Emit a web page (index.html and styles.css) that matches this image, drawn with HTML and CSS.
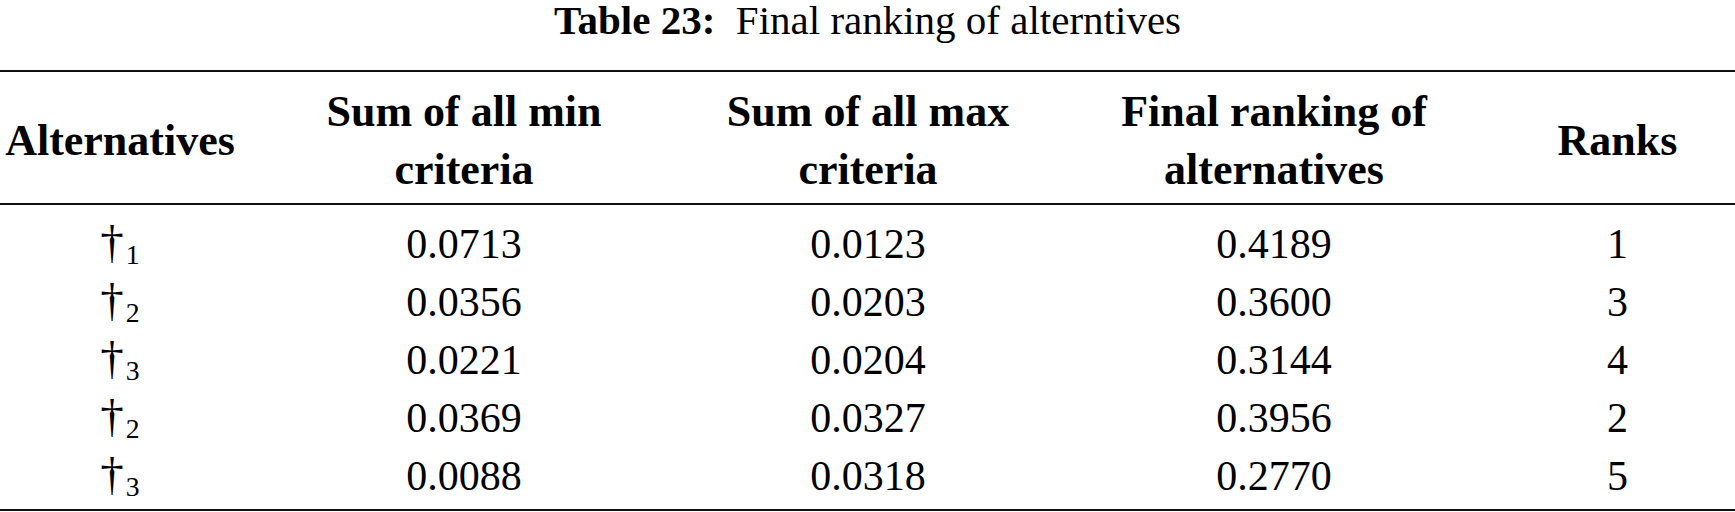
FILE: index.html
```html
<!DOCTYPE html>
<html lang="en">
<head>
    <meta charset="UTF-8">
    <meta name="viewport" content="width=device-width, initial-scale=1.0">
    <title>Table 23</title>

    <link rel="stylesheet" href="styles.css">
</head>
<body>
    <table class="rank-table">
        <caption><b>Table 23:</b>&nbsp; Final ranking of alterntives</caption>
        <colgroup>
            <col class="col-alt">
            <col class="col-min">
            <col class="col-max">
            <col class="col-final">
            <col class="col-rank">
        </colgroup>
        <thead>
            <tr>
                <th>Alternatives</th>
                <th>Sum of all min<br>criteria</th>
                <th>Sum of all max<br>criteria</th>
                <th>Final ranking of<br>alternatives</th>
                <th>Ranks</th>
            </tr>
        </thead>
        <tbody>
            <tr><td><span class="dag">†</span><sub>1</sub></td><td>0.0713</td><td>0.0123</td><td>0.4189</td><td>1</td></tr>
            <tr><td><span class="dag">†</span><sub>2</sub></td><td>0.0356</td><td>0.0203</td><td>0.3600</td><td>3</td></tr>
            <tr><td><span class="dag">†</span><sub>3</sub></td><td>0.0221</td><td>0.0204</td><td>0.3144</td><td>4</td></tr>
            <tr><td><span class="dag">†</span><sub>2</sub></td><td>0.0369</td><td>0.0327</td><td>0.3956</td><td>2</td></tr>
            <tr><td><span class="dag">†</span><sub>3</sub></td><td>0.0088</td><td>0.0318</td><td>0.2770</td><td>5</td></tr>
        </tbody>
    </table>
</body>
</html>
```
FILE: styles.css
```css
body{
    margin: 0;
    background-color: #fff;
    color: #000;
    font-family: 'Liberation Serif', 'Times New Roman', serif;
}
.rank-table{
    width: 100%;
    border-collapse: collapse;
    table-layout: fixed;
}
.rank-table caption{
    font-size: 41px;
    line-height: 40px;
    padding: 0 0 30px 0;
    text-align: center;
}
.col-alt{ width: 240px; }
.col-min{ width: 448px; }
.col-max{ width: 360px; }
.col-final{ width: 452px; }
.col-rank{ width: 235px; }

.rank-table th{
    font-size: 44px;
    font-weight: bold;
    line-height: 58px;
    padding: 11px 0 4px 0;
    text-align: center;
    vertical-align: middle;
    border-top: 2px solid #111;
    border-bottom: 2px solid #111;
}
.rank-table td{
    font-size: 42px;
    line-height: 58px;
    padding: 0;
    text-align: center;
}
.rank-table tbody tr:first-child td{
    padding-top: 10px;
}
.rank-table tbody tr:last-child td{
    padding-bottom: 4px;
    border-bottom: 2px solid #111;
}
.rank-table .dag{
    font-size: 1.12em;
    line-height: 0;
}
.rank-table sub{
    font-size: 0.66em;
    line-height: 0;
    vertical-align: -0.2em;
    margin-left: 2px;
}
```
